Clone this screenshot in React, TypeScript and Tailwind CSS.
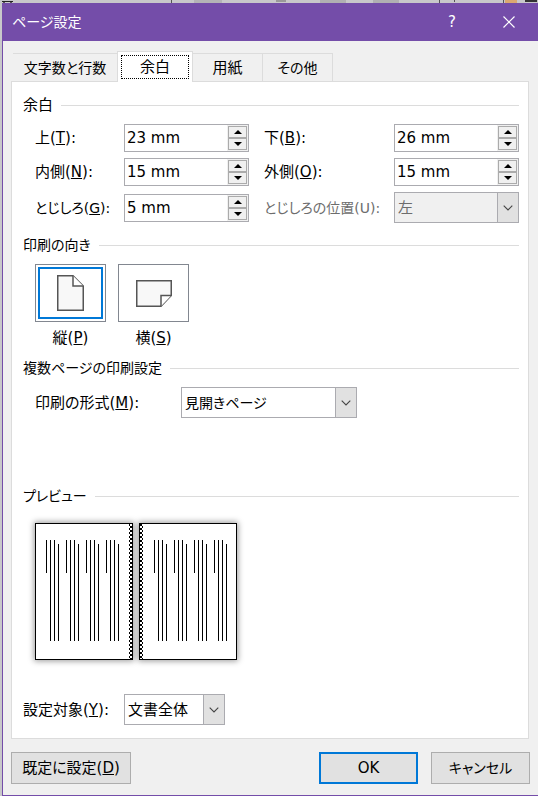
import { useState, type ReactNode } from "react";

type SpinProps = {
  id: string;
  initial: number;
};

const Heading = ({ children }: { children: ReactNode }) => (
  <div className="flex items-center gap-2 h-5">
    <h2>{children}</h2>
    <div className="grow h-px bg-[#dcdcdc]" />
  </div>
);

const SpinBox = ({ id, initial }: SpinProps) => {
  const [value, setValue] = useState(`${initial} mm`);
  const step = (by: number) => setValue(`${Math.max(0, parseInt(value) + by || 0)} mm`);
  return (
    <div className="flex h-7 border border-[#ababb0] bg-white">
      <input
        id={id}
        type="text"
        value={value}
        onChange={(e) => setValue(e.target.value)}
        className="grow min-w-0 px-0.5 outline-none"
      />
      <div className="flex flex-col w-[21px] p-px shrink-0 bg-[#f0f0f0]">
        <button
          type="button"
          aria-label="増やす"
          onClick={() => step(1)}
          className="grow flex items-center justify-center border border-[#ababab] bg-[#f0f0f0]"
        >
          <svg width="8" height="4" viewBox="0 0 8 4">
            <path d="M0 4L4 0L8 4Z" />
          </svg>
        </button>
        <button
          type="button"
          aria-label="減らす"
          onClick={() => step(-1)}
          className="grow flex items-center justify-center border border-[#ababab] bg-[#f0f0f0]"
        >
          <svg width="8" height="4" viewBox="0 0 8 4">
            <path d="M0 0L4 4L8 0Z" />
          </svg>
        </button>
      </div>
    </div>
  );
};

type DropProps = {
  id: string;
  options: string[];
  disabled?: boolean;
};

const DropDown = ({ id, options, disabled }: DropProps) => (
  <div className="relative h-[31px]">
    <select
      id={id}
      disabled={disabled}
      className="appearance-none w-full h-full pl-[3px] pr-6 border border-[#ababb0] bg-white outline-none disabled:bg-[#f0f0f0] disabled:text-[#6d6d6d] disabled:opacity-100"
    >
      {options.map((o) => (
        <option key={o}>{o}</option>
      ))}
    </select>
    <span className="absolute right-0 inset-y-0 w-[22px] flex items-center justify-center border border-[#ababb0] bg-[#e1e1e1] pointer-events-none">
      <svg width="10" height="6" viewBox="0 0 10 6" fill="none" stroke="#444" strokeWidth="1.1">
        <path d="M0.7 0.7L5 5L9.3 0.7" />
      </svg>
    </span>
  </div>
);

// one sheet of the preview, binding is the side with the gutter
const Sheet = ({ binding }: { binding: "left" | "right" }) => {
  const start = binding === "right" ? 11 : 15;
  const gutter = binding === "right" ? 94 : 1;
  return (
    <svg
      width="98"
      height="137"
      viewBox="0 0 98 137"
      shapeRendering="crispEdges"
      className="shadow-[0_0_6px_1px_#00000066]"
    >
      <defs>
        <pattern id={`gutter-${binding}`} x="1" y="1" width="4" height="4" patternUnits="userSpaceOnUse">
          <rect width="2" height="2" />
          <rect x="2" y="2" width="2" height="2" />
        </pattern>
      </defs>
      <rect x="0.5" y="0.5" width="97" height="136" fill="#fff" stroke="#000" />
      <rect x={gutter} y="1" width="3" height="135" fill={`url(#gutter-${binding})`} />
      {[0, 20, 40, 60].map((x) => (
        <g key={x}>
          <rect x={start + x} y="17" width="1" height="33" />
          <rect x={start + x + 4} y="17" width="1" height="101" />
          <rect x={start + x + 8} y="17" width="1" height="101" />
          <rect x={start + x + 12} y="21" width="1" height="97" />
        </g>
      ))}
    </svg>
  );
};

const tabStyle = "h-7 border-t border-r border-[#dcdcdc]";

const App = () => {
  const [orientation, setOrientation] = useState("portrait");

  return (
    <div className="bg-[#c8c8ca] pl-0.5 text-[15px] leading-5 text-black font-['DejaVu_Sans','Noto_Sans_CJK_JP',sans-serif] [font-feature-settings:'palt']">
      {/* edge of the document window behind the dialog */}
      <svg width="100%" height="3" className="block" fill="#555">
        <rect y="1" width="11" height="1" fill="#222" />
        <rect x="1" y="2" width="2" height="1" />
        <rect x="8" y="2" width="2" height="1" />
        <rect x="169" width="1" height="3" />
        <rect x="192" width="28" height="3" fill="#b4b4b6" />
        <rect x="274" width="10" height="2" fill="#999" />
        <rect x="318" width="26" height="3" fill="#b0b0b2" />
        <rect x="371" width="26" height="3" fill="#b0b0b2" />
        <rect x="437" width="1" height="3" />
        <rect x="452" width="1" height="2" />
        <rect x="501" width="1" height="3" />
        <rect x="503" width="12" height="3" fill="#dba870" />
        <rect x="523" width="12" height="2" fill="#333" />
      </svg>
      <div className="border-l border-b border-[#744da9] bg-[#f0f0f0]">
        <header className="flex items-center h-[38px] pl-[9px] bg-[#744da9] text-white">
          <h1 className="grow text-sm">ページ設定</h1>
          <button type="button" aria-label="ヘルプ" className="w-14 h-full">
            ?
          </button>
          <button type="button" aria-label="閉じる" className="w-[58px] h-full flex items-center justify-center">
            <svg width="12" height="12" viewBox="0 0 12 12" stroke="#fff" strokeWidth="1.2">
              <path d="M0.5 0.5L11.5 11.5M11.5 0.5L0.5 11.5" />
            </svg>
          </button>
        </header>

        <div className="pt-2.5 pl-2 pr-[9px]">
          <div role="tablist" className="flex items-end pl-0.5">
            <button type="button" role="tab" className="w-[104px] h-7 border-t border-[#dcdcdc] text-sm">
              文字数と行数
            </button>
            <button
              type="button"
              role="tab"
              aria-selected="true"
              className="relative w-[76px] h-[31px] -mb-px p-[3px] border border-b-0 border-[#dcdcdc] bg-white"
            >
              <span className="flex items-center justify-center h-full border border-dotted border-black">余白</span>
            </button>
            <button type="button" role="tab" className={`${tabStyle} w-[70px]`}>
              用紙
            </button>
            <button type="button" role="tab" className={`${tabStyle} w-[70px] text-sm`}>
              その他
            </button>
          </div>

          <form className="border border-[#dcdcdc] bg-white pt-[13px] pb-[13px] pl-[11px] pr-[9px]">
            <Heading>余白</Heading>
            <div className="grid grid-cols-[89px_125px_1fr_125px] items-center gap-y-1.5 mt-[9px] pl-3">
              <label htmlFor="top">
                上(<u>T</u>):
              </label>
              <SpinBox id="top" initial={23} />
              <label htmlFor="bottom" className="pl-[15px]">
                下(<u>B</u>):
              </label>
              <SpinBox id="bottom" initial={26} />
              <label htmlFor="inner">
                内側(<u>N</u>):
              </label>
              <SpinBox id="inner" initial={15} />
              <label htmlFor="outer" className="pl-[15px]">
                外側(<u>O</u>):
              </label>
              <SpinBox id="outer" initial={15} />
              <label htmlFor="gutter" className="text-sm">
                とじしろ(<u>G</u>):
              </label>
              <SpinBox id="gutter" initial={5} />
              <label htmlFor="gutterPos" className="pl-[15px] text-sm text-[#6d6d6d] whitespace-nowrap">
                とじしろの位置(U):
              </label>
              <DropDown id="gutterPos" options={["左", "上"]} disabled />
            </div>

            <div className="mt-3 text-sm">
              <Heading>印刷の向き</Heading>
            </div>
            <div className="flex gap-3 mt-[9px] pl-3">
              <label className="w-[71px] text-center">
                <input
                  type="radio"
                  name="orientation"
                  className="peer sr-only"
                  checked={orientation === "portrait"}
                  onChange={() => setOrientation("portrait")}
                />
                <span className="flex h-[58px] p-0.5 mb-1.5 border border-[#828790] *:border-transparent peer-checked:*:border-[#0078d7]">
                  <span className="grow flex items-center justify-center border-2">
                    <svg width="27" height="36" viewBox="0 0 27 36" fill="#f8f8f8" stroke="#555" strokeWidth="1.5">
                      <path d="M0.75 0.75H16L26.25 11V35.25H0.75Z" />
                      <path d="M16 0.75V11H26.25" fill="#fff" />
                    </svg>
                  </span>
                </span>
                縦(<u>P</u>)
              </label>
              <label className="w-[71px] text-center">
                <input
                  type="radio"
                  name="orientation"
                  className="peer sr-only"
                  checked={orientation === "landscape"}
                  onChange={() => setOrientation("landscape")}
                />
                <span className="flex h-[58px] p-0.5 mb-1.5 border border-[#828790] *:border-transparent peer-checked:*:border-[#0078d7]">
                  <span className="grow flex items-center justify-center border-2">
                    <svg width="36" height="27" viewBox="0 0 36 27" fill="#f8f8f8" stroke="#555" strokeWidth="1.5">
                      <path d="M0.75 0.75H35.25V15.5L25 26.25H0.75Z" />
                      <path d="M35.25 15.5H25V26.25" fill="#fff" />
                    </svg>
                  </span>
                </span>
                横(<u>S</u>)
              </label>
            </div>

            <div className="mt-2.5 text-sm">
              <Heading>複数ページの印刷設定</Heading>
            </div>
            <div className="grid grid-cols-[146px_176px] items-center mt-[9px] pl-3">
              <label htmlFor="multi">
                印刷の形式(<u>M</u>):
              </label>
              <div className="text-sm">
                <DropDown id="multi" options={["見開きページ", "標準", "袋とじ"]} />
              </div>
            </div>

            <div className="mt-[68px] text-sm">
              <Heading>プレビュー</Heading>
            </div>
            <div className="flex gap-1.5 mt-[17px] pl-3">
              <Sheet binding="right" />
              <Sheet binding="left" />
            </div>

            <div className="grid grid-cols-[101px_101px] items-center mt-[34px]">
              <label htmlFor="target">
                設定対象(<u>Y</u>):
              </label>
              <DropDown id="target" options={["文書全体", "これ以降"]} />
            </div>
          </form>
        </div>

        <footer className="flex gap-[13px] pt-[13px] pb-[11px] pl-2 pr-2">
          <button type="button" className="w-[120px] h-8 mr-auto border border-[#adadad] bg-[#e1e1e1]">
            既定に設定(<u>D</u>)
          </button>
          <button type="button" className="w-[99px] h-8 border-2 border-[#0078d7] bg-[#e1e1e1]">
            OK
          </button>
          <button type="button" className="w-[99px] h-8 border border-[#adadad] bg-[#e1e1e1] text-sm">
            キャンセル
          </button>
        </footer>
      </div>
    </div>
  );
};

export default App;
